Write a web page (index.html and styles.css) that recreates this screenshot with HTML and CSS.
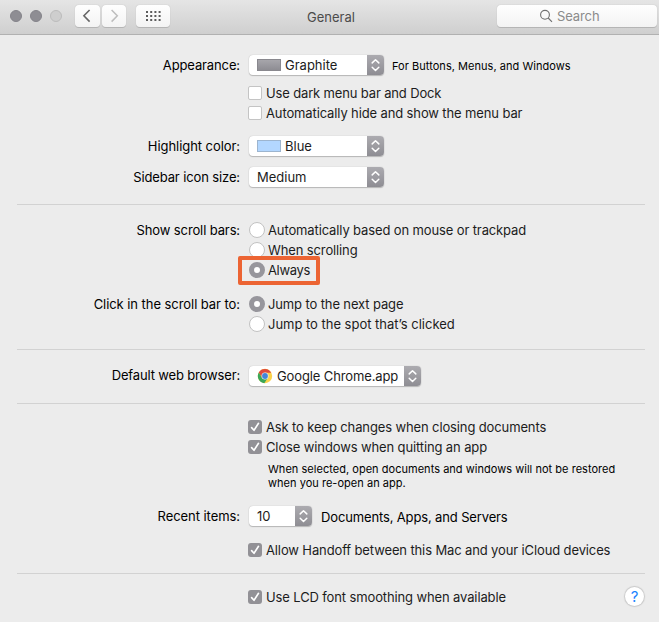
FILE: index.html
```
<!DOCTYPE html>
<html lang="en">
<head>
<meta charset="utf-8">
<title>General</title>
<link rel="stylesheet" href="styles.css">
</head>
<body>
<svg class="defs" width="0" height="0">
  <symbol id="arrows" viewBox="0 0 17 20"><path d="M5.2 7.9 8.5 4.7l3.3 3.2M5.2 12.3l3.3 3.2 3.3-3.2" fill="none" stroke="#fff" stroke-width="1.5" stroke-linecap="round" stroke-linejoin="round"/></symbol>
  <symbol id="check" viewBox="0 0 14 14"><path d="M3.6 7.6 6 10.3l4.5-7" fill="none" stroke="#fff" stroke-width="1.6" stroke-linecap="round" stroke-linejoin="round"/></symbol>
</svg>
<header class="titlebar">
  <div class="lights"><i></i><i></i><i class="off"></i></div>
  <div class="nav">
    <span class="btn"><svg width="25" height="22"><path d="M14.6 5 8.9 10.8l5.7 5.8" fill="none" stroke="#666" stroke-width="1.6"/></svg></span>
    <span class="btn"><svg width="24" height="22"><path d="M9.6 5l5.7 5.8-5.7 5.8" fill="none" stroke="#bdbdbd" stroke-width="1.5"/></svg></span>
  </div>
  <span class="btn grid"><svg width="34" height="22"><path d="M10 7h15M10 11h15M10 15h15" stroke="#5c5c5c" stroke-width="2" stroke-dasharray="2 2.2"/></svg></span>
  <h1 class="title">General</h1>
  <div class="btn search"><svg width="14" height="14" viewBox="0 0 14 14"><g fill="none" stroke="#707070" stroke-width="1.1"><circle cx="6" cy="5.8" r="4.4"/><path d="M9.2 9l3.8 3.8"/></g></svg><span>Search</span></div>
</header>
<main>
  <div class="row r-app"><label>Appearance:</label><div class="popup"><b class="swatch graphite"></b><span>Graphite</span><em><svg><use href="#arrows"/></svg></em></div><small class="aside">For Buttons, Menus, and Windows</small></div>
  <div class="row r-dark"><label></label><i class="box"></i><span class="text tighter">Use dark menu bar and Dock</span></div>
  <div class="row"><label></label><i class="box"></i><span class="text">Automatically hide and show the menu bar</span></div>
  <div class="row r-high"><label class="close">Highlight color:</label><div class="popup"><b class="swatch blue"></b><span>Blue</span><em><svg><use href="#arrows"/></svg></em></div></div>
  <div class="row r-side"><label>Sidebar icon size:</label><div class="popup"><span>Medium</span><em><svg><use href="#arrows"/></svg></em></div></div>
  <hr class="s1">
  <div class="row r-scroll"><label>Show scroll bars:</label><i class="radio"></i><span class="text">Automatically based on mouse or trackpad</span></div>
  <div class="row"><label></label><i class="radio"></i><span class="text">When scrolling</span></div>
  <div class="row"><label></label><i class="radio on"></i><span class="text tightest">Always</span><div class="callout"></div></div>
  <div class="row r-click"><label class="close">Click in the scroll bar to:</label><i class="radio on"></i><span class="text">Jump to the next page</span></div>
  <div class="row"><label></label><i class="radio"></i><span class="text wide">Jump to the spot that’s clicked</span></div>
  <hr class="s2">
  <div class="row r-web"><label class="web-label">Default web browser:</label><div class="popup web"><svg class="chrome" width="16" height="16" viewBox="0 0 16 16"><circle cx="8" cy="8" r="7.2" fill="#fbd24b"/><path d="M1.76 4.4A7.2 7.2 0 0 1 14.24 4.7H8L4.9 9.8Z" fill="#df4a3c"/><path d="M1.76 4.4A7.2 7.2 0 0 0 7.3 15.17L10.9 9.7 8 11.3 4.9 9.8Z" fill="#3ba757"/><circle cx="8" cy="8" r="3.5" fill="#eef3f6"/><circle cx="8" cy="8" r="2.9" fill="#4385d8"/></svg><span class="text">Google Chrome.app</span><em><svg><use href="#arrows"/></svg></em></div></div>
  <hr class="s3">
  <div class="row r-ask"><label></label><i class="box on"><svg><use href="#check"/></svg></i><span class="text">Ask to keep changes when closing documents</span></div>
  <div class="row"><label></label><i class="box on"><svg><use href="#check"/></svg></i><span class="text">Close windows when quitting an app</span></div>
  <p class="note">When selected, open documents and windows will not be restored<br>when you re-open an app.</p>
  <div class="row r-recent"><label class="close">Recent items:</label><div class="popup count"><span>10</span><em><svg><use href="#arrows"/></svg></em></div><span class="docs">Documents, Apps, and Servers</span></div>
  <div class="row r-hand"><label></label><i class="box on"><svg><use href="#check"/></svg></i><span class="text">Allow Handoff between this Mac and your iCloud devices</span></div>
  <hr class="s4">
  <div class="row r-lcd"><label></label><i class="box on"><svg><use href="#check"/></svg></i><span class="text">Use LCD font smoothing when available</span><span class="help">?</span></div>
</main>
</body>
</html>
```
FILE: styles.css
```
* { box-sizing: border-box; }
body { margin: 0; width: 659px; height: 622px; overflow: hidden; background: #ececec; color: #1c1c1c; font: 13px/20px Inter, "Liberation Sans", sans-serif; }
i, em { font-style: normal; }
svg { display: block; flex: none; }
.defs { position: absolute; }

/* Title bar */
.titlebar { height: 35px; display: flex; align-items: flex-start; padding: 5px 2px 0 10px; background: linear-gradient(#e5e5e5, #cfcfcf); border-bottom: 1px solid #b1b1b1; }
.lights { display: flex; gap: 8px; padding-top: 5px; width: 65px; }
.lights i { width: 12px; height: 12px; border-radius: 50%; background: #8e8d93; border: 1px solid #84838a; }
.lights .off { background: #cecece; border-color: #bcbcbc; }
.nav { display: flex; gap: 2px; }
.btn { display: block; height: 22px; border-radius: 4px; background: linear-gradient(#fefefe, #f3f3f3); box-shadow: 0 1px 0 #b5b5b5, 0 0 1px #aaa; }
.grid { margin-left: 10px; }
.title { margin: 2px 0 0; flex: 1; font-size: 13px; font-weight: 400; line-height: 20px; color: #4b4b4b; padding-left: 137px; }
.search { width: 160px; display: flex; align-items: center; padding-left: 42px; gap: 4px; color: #8b8b8b; }
.search span { letter-spacing: -0.1px; }

/* Setting rows */
.row { display: flex; align-items: center; height: 20px; white-space: nowrap; position: relative; }
.row label { width: 240px; margin-right: 8px; text-align: right; color: #000; flex: none; letter-spacing: -0.12px; }
.row label.close { letter-spacing: -0.06px; }
.row label.web-label { padding-bottom: 2px; letter-spacing: -0.15px; }
.text { letter-spacing: -0.125px; }
.tighter { letter-spacing: -0.15px; }
.tightest { letter-spacing: -0.35px; }
.text.wide { letter-spacing: -0.02px; }
.r-app { margin-top: 20px; }
.r-dark { margin-top: 8px; }
.r-high { margin-top: 13px; }
.r-side { margin-top: 11px; }
.r-scroll { margin-top: 15px; }
.r-click { margin-top: 14px; }
.r-web { margin-top: 16px; }
.r-ask { margin-top: 13px; }
.r-recent { margin-top: 16px; }
.r-hand { margin-top: 14px; }
.r-lcd { margin-top: 13px; }
hr { border: 0; height: 1px; margin: 0 14px 0 17px; background: #d2d2d2; }
.s1 { margin-top: 17px; }
.s2 { margin-top: 15px; }
.s3 { margin-top: 17px; }
.s4 { margin-top: 13px; }

/* Controls */
.popup { display: flex; align-items: center; width: 135px; height: 20px; margin-left: 1px; padding-left: 8px; border-radius: 4px; background: #fff; box-shadow: 0 1px 1px #b5b5b5, 0 0 1px #aaa; overflow: hidden; }
.popup em { margin-left: auto; width: 17px; height: 20px; background: linear-gradient(#acabb0, #8e8d93); }
.popup em svg { width: 17px; height: 20px; }
.popup.web { width: 172px; }
.popup.count { width: 63px; }
.swatch { width: 24px; height: 12px; margin-right: 4px; }
.graphite { background: linear-gradient(#a7a6ab, #8e8d93); border: 1px solid #89888e; }
.blue { background: #b3d7ff; border: 1px solid #9db5cf; }
.chrome { margin-right: 4px; }
.aside { font-size: 11px; margin-left: 8px; padding-top: 1px; color: #000; letter-spacing: 0.04px; }
.box { width: 14px; height: 14px; flex: none; border-radius: 2px; background: #fff; border: 1px solid #c4c4c4; margin-right: 4px; }
.box.on { background: #929196; border: 0; border-radius: 3px; }
.box svg { width: 14px; height: 14px; }
.radio { width: 16px; height: 16px; margin: 0 3px 0 1px; flex: none; border-radius: 50%; background: #fff; border: 1px solid #c2c2c2; }
.radio.on { border: 5px solid #97969c; }
.callout { position: absolute; left: 238px; top: -4px; width: 82px; height: 29px; border: 4px solid #ec6433; border-radius: 2px; }
.note { margin: 5px 0 0 268px; font-size: 11px; line-height: 14px; color: #000; white-space: nowrap; letter-spacing: 0.03px; }
.docs { margin-left: 9px; padding-top: 2px; color: #000; letter-spacing: -0.14px; }
.help { margin: -2px 15px 0 auto; width: 19px; height: 19px; border-radius: 50%; background: #fff; box-shadow: 0 0 1px 1px #c9c9c9; text-align: center; color: #1a83ff; font-size: 15px; line-height: 19px; font-weight: 400; }
```
